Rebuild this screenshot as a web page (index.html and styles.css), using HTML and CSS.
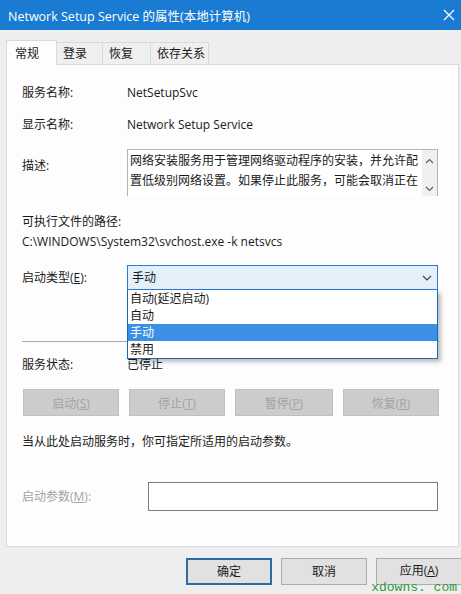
FILE: index.html
```html
<!DOCTYPE html>
<html lang="zh-CN">
<head>
  <meta charset="UTF-8">
  <title>Network Setup Service 的属性(本地计算机)</title>
  <link rel="stylesheet" href="styles.css">
</head>
<body>

  <header class="titlebar">
    <span class="title">Network Setup Service 的属性(本地计算机)</span>
    <svg class="close" width="12" height="12" viewBox="0 0 12 12">
      <path d="M1 1 L11 11 M11 1 L1 11" stroke="#fff" stroke-width="1.2" fill="none"/>
    </svg>
  </header>

  <div class="tabs">
    <div class="tab active">常规</div>
    <div class="tab t2">登录</div>
    <div class="tab t3">恢复</div>
    <div class="tab t4">依存关系</div>
  </div>

  <div class="panel">
    <div class="row r1">
      <span class="label">服务名称:</span>
      <span>NetSetupSvc</span>
    </div>
    <div class="row r2">
      <span class="label">显示名称:</span>
      <span>Network Setup Service</span>
    </div>
    <div class="row desc-row">
      <span class="label desc-label">描述:</span>
      <div class="desc-box">
        <div class="desc-text">网络安装服务用于管理网络驱动程序的安装，并允许配置低级别网络设置。如果停止此服务，可能会取消正在</div>
        <div class="scroll">
          <svg width="9" height="6" viewBox="0 0 9 6"><path d="M1 5 L4.5 1.5 L8 5" stroke="#606060" stroke-width="1.2" fill="none"/></svg>
          <svg width="9" height="6" viewBox="0 0 9 6"><path d="M1 1 L4.5 4.5 L8 1" stroke="#606060" stroke-width="1.2" fill="none"/></svg>
        </div>
      </div>
    </div>

    <div class="path-label">可执行文件的路径:</div>
    <div class="path">C:\WINDOWS\System32\svchost.exe -k netsvcs</div>

    <div class="row type-row">
      <span class="label">启动类型(<u>E</u>):</span>
      <div class="select-wrap">
        <div class="select">
          <span>手动</span>
          <svg width="10" height="6" viewBox="0 0 10 6"><path d="M1 1 L5 5 L9 1" stroke="#404040" stroke-width="1.1" fill="none"/></svg>
        </div>
        <ul class="dropdown">
          <li>自动(延迟启动)</li>
          <li>自动</li>
          <li class="picked">手动</li>
          <li>禁用</li>
        </ul>
      </div>
    </div>

    <div class="separator"></div>

    <div class="row status-row">
      <span class="label">服务状态:</span>
      <span>已停止</span>
    </div>

    <div class="svc-buttons">
      <button class="b1">启动(<u>S</u>)</button>
      <button class="b2">停止(<u>T</u>)</button>
      <button class="b3">暂停(<u>P</u>)</button>
      <button class="b4">恢复(<u>R</u>)</button>
    </div>

    <div class="hint">当从此处启动服务时，你可指定所适用的启动参数。</div>

    <div class="row param-row">
      <span class="label param-label">启动参数(<u>M</u>):</span>
      <div class="param-input"></div>
    </div>
  </div>

  <div class="footer">
    <button class="ok">确定</button>
    <button>取消</button>
    <button class="apply">应用(<u>A</u>)</button>
  </div>

  <div class="watermark">xdowns. com</div>

</body>
</html>
```

FILE: styles.css
```css
body {
  margin: 0;
  width: 461px;
  height: 594px;
  overflow: hidden;
  background-color: #eeedef;
  font-family: "Open Sans", "Noto Sans CJK SC", sans-serif;
  font-size: 12px;
  color: #1a1a1a;
  position: relative;
}

.titlebar {
  height: 30px;
  background-color: #1a7bd2;
  color: white;
  display: flex;
  justify-content: space-between;
  align-items: center;
  padding: 0 6px 0 8px;
  font-size: 12.5px;
}

.tabs {
  display: flex;
  align-items: flex-end;
  padding: 9px 0 0 6px;
  height: 25px;
}

.tab {
  height: 22px;
  line-height: 22px;
  padding-left: 6px;
  box-sizing: border-box;
  border: 1px solid #d9d9d9;
  border-bottom: none;
  border-left: none;
  background-color: #efeff0;
}

.tab.active {
  height: 25px;
  line-height: 26px;
  width: 51px;
  padding-left: 8px;
  background-color: #fdfdfd;
  border-left: 1px solid #d9d9d9;
  margin-bottom: -1px;
  position: relative;
  z-index: 1;
}

.t2 { width: 46px; }
.t3 { width: 48px; }
.t4 { width: 58px; }

.panel {
  margin: 0 2px 0 6px;
  height: 483px;
  box-sizing: border-box;
  background-color: #fdfdfd;
  border: 1px solid #d9d9d9;
  padding: 20px 19px 0 15px;
}

.row {
  display: flex;
  align-items: center;
  line-height: 16px;
}

.label {
  width: 105px;
  flex-shrink: 0;
}

.r2 { margin-top: 16px; }

.desc-row {
  margin-top: 16px;
  align-items: flex-start;
}

.desc-label { padding-top: 9px; }

.desc-box {
  width: 311px;
  height: 47px;
  box-sizing: border-box;
  border: 1px solid #b4b4b4;
  border-bottom: none;
  display: flex;
  background-color: #fff;
}

.desc-text {
  flex: 1;
  padding: 1px 0 0 2px;
  line-height: 20px;
  overflow: hidden;
}

.scroll {
  width: 15px;
  background-color: #f0f0f0;
  display: flex;
  flex-direction: column;
  justify-content: space-between;
  align-items: center;
  padding: 8px 0 4px;
}

.path-label {
  margin-top: 18px;
  line-height: 16px;
}

.path {
  margin-top: 4px;
  line-height: 16px;
}

.type-row { margin-top: 15px; }

.select-wrap {
  position: relative;
  width: 311px;
}

.select {
  height: 25px;
  box-sizing: border-box;
  border: 1px solid #2b7bd2;
  background-color: #e3eff9;
  display: flex;
  justify-content: space-between;
  align-items: center;
  padding: 0 5px 0 4px;
}

.dropdown {
  position: absolute;
  top: 25px;
  left: 0;
  width: 311px;
  box-sizing: border-box;
  margin: 0;
  padding: 0;
  list-style: none;
  background-color: #fff;
  border: 1px solid #1b6ab8;
  border-top: none;
  box-shadow: 3px 3px 4px rgba(0, 0, 0, 0.25);
  z-index: 5;
}

.dropdown li {
  height: 17px;
  line-height: 17px;
  padding-left: 2px;
}

.dropdown li.picked {
  background-color: #3b8fe6;
  color: white;
}

.separator {
  margin-top: 51px;
  height: 1px;
  background-color: #a8a8a8;
}

.status-row { margin-top: 15px; }

.svc-buttons {
  display: flex;
  justify-content: space-between;
  margin-top: 16px;
  padding-left: 1px;
}

.svc-buttons button {
  width: 96px;
  height: 27px;
  background-color: #cccccc;
  border: 1px solid #c4c0c0;
  color: #a3a3a3;
  font-family: inherit;
  font-size: 12px;
}

.svc-buttons .b3 { width: 98px; }

.hint {
  margin-top: 18px;
  line-height: 16px;
}

.param-row { margin-top: 32px; }

.param-label {
  width: 126px;
  color: #a3a3a3;
}

.param-input {
  width: 290px;
  height: 29px;
  box-sizing: border-box;
  border: 1px solid #7a7a7a;
  background-color: #fff;
}

.footer {
  display: flex;
  justify-content: flex-end;
  gap: 9px;
  padding-top: 11px;
  margin-right: -1px;
}

.footer button {
  width: 86px;
  height: 27px;
  background-color: #e1e1e1;
  border: 1px solid #adadad;
  font-family: inherit;
  font-size: 12px;
  line-height: 14px;
  color: #1a1a1a;
}

.footer .ok {
  border: 2px solid #2f6aa0;
}

.footer .apply {
  padding-bottom: 3px;
}

.watermark {
  position: absolute;
  right: 4px;
  bottom: 0;
  color: #2f9a3a;
  font-family: "Liberation Mono", monospace;
  font-size: 13px;
  line-height: 13px;
  height: 13px;
}
```
